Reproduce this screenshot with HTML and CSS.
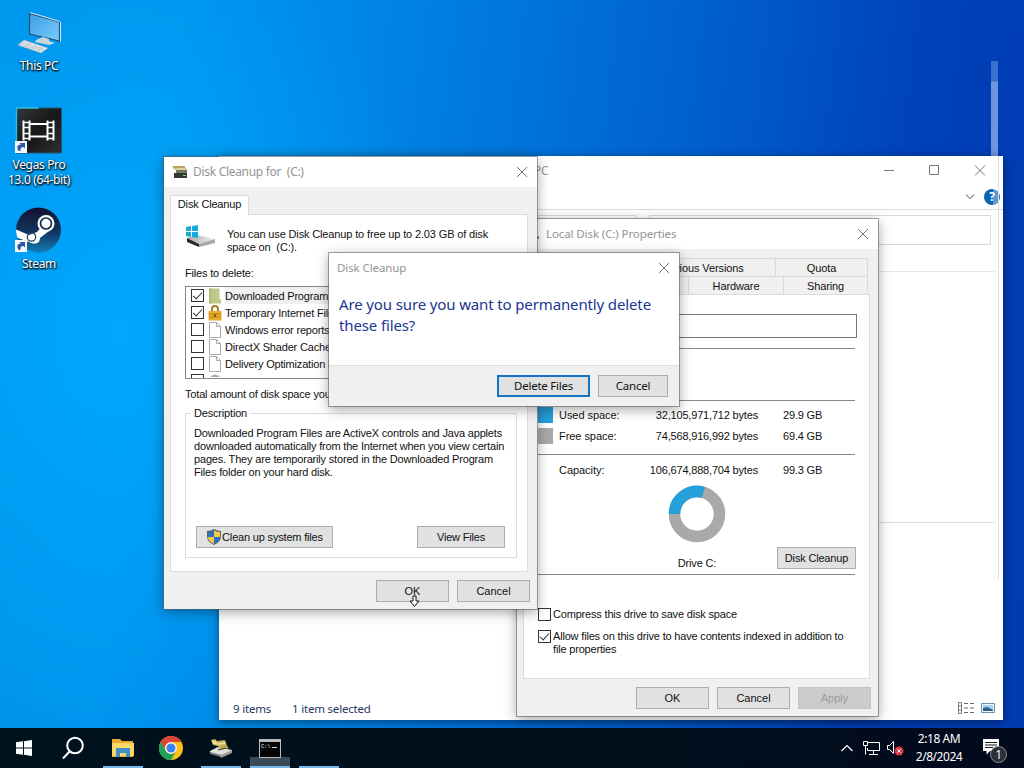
FILE: index.html
```html
<!DOCTYPE html>
<html lang="en">
<head>
<meta charset="utf-8">
<title>Desktop</title>
<link rel="stylesheet" href="styles.css">
</head>
<body>
<div class="desktop">
  <div class="icons">
    <div class="shortcut pc">
      <svg width="48" height="48" viewBox="0 0 48 48"><defs><linearGradient id="scr" x1="0" y1="0" x2="1" y2="1"><stop offset="0" stop-color="#3d9de4"/><stop offset="1" stop-color="#79ccfd"/></linearGradient></defs><path d="M14.500 5.500l30 8.500v19l-30-7z" fill="url(#scr)" stroke="#24506f" stroke-width="1.200"/><path d="M15 4.500l30 9" stroke="#d5edf8"/><path d="M45.500 14v19.500" stroke="#dceaf3"/><path d="M21 32l7-3 6 2v2l6 2-6 2-14-3z" fill="#c9d6dc"/><path d="M3 37l6-5 24 8-7 5z" fill="#e5e8ea" stroke="#87a7b9" stroke-width=".5"/><path d="M6 36l21 7M8 34.500l21 7M9 40l6-5M15 42l6-5M21 44l6-5" stroke="#aab8c0" stroke-width=".7"/></svg>
      <span>This PC</span>
    </div>
    <div class="shortcut vegas">
      <svg width="48" height="48" viewBox="0 0 48 48"><defs><linearGradient id="veg" x1="0" y1="0" x2="1" y2="1"><stop offset="0" stop-color="#34373a"/><stop offset=".5" stop-color="#161718"/><stop offset="1" stop-color="#303133"/></linearGradient></defs><path d="M1.500 2h45v45h-45z" fill="url(#veg)" stroke="#28556d"/><path d="M1.500 47V2h22" fill="none" stroke="#25c5e7" stroke-width="1.300"/><g stroke="#fff" stroke-width="2" fill="none" transform="translate(.5 .5)"><path d="M8 14v20M14 14v20M32 14v20M38 14v20M14 17.500h18M14 30h18"/><path d="M8 16h6M8 21h6M8 27h6M8 32h6M32 16h6M32 21h6M32 27h6M32 32h6" stroke-width="1.700"/></g><path d="M0 35h12v12H0z" fill="#f4f8fb"/><path d="M3.500 45Q0 39 6 38.500L4.500 37H10v5.500L8.500 41Q5 41 5.500 45z" fill="#285aa5"/></svg>
      <span>Vegas Pro</span><span>13.0 (64-bit)</span>
    </div>
    <div class="shortcut steam">
      <svg width="48" height="48" viewBox="0 0 48 48"><defs><linearGradient id="st" x1="0" y1="0" x2="0" y2="1"><stop offset="0" stop-color="#11132c"/><stop offset=".55" stop-color="#123562"/><stop offset="1" stop-color="#127eb2"/></linearGradient><clipPath id="stc"><circle cx="23.500" cy="23" r="22.500"/></clipPath></defs><circle cx="23.500" cy="23" r="22.500" fill="url(#st)"/><g clip-path="url(#stc)"><path d="M0 22l14 6 8-3 6-7 6 6-9 7c0 6-6 7-11 4L0 30z" fill="#fff"/><circle cx="31" cy="16.500" r="8.500" fill="#fff"/></g><circle cx="31" cy="16.500" r="5.500" fill="#fff" stroke="#17294c" stroke-width="1.700"/><circle cx="16.500" cy="30" r="4.200" fill="none" stroke="#25446e" stroke-width="1.300"/><path d="M0 33h12v12H0z" fill="#f4f8fb"/><path d="M3.500 43Q0 37 6 36.500L4.500 35H10v5.500L8.500 39Q5 39 5.500 43z" fill="#285aa5"/></svg>
      <span>Steam</span>
    </div>
  </div>
  <div class="trail"></div>

  <section class="window explorer">
    <header class="ex-title"><span>PC</span>
      <svg width="110" height="14" viewBox="0 0 110 14" fill="none" stroke="#777"><path d="M3 7.500h10M48.500 2.500h9v9h-9zM94 2.500l10 10M104 2.500l-10 10"/></svg>
    </header>
    <div class="ex-ribbon">
      <svg width="10" height="8" viewBox="0 0 10 8" fill="none" stroke="#999" stroke-width="1.300"><path d="M1 1.500l4 4 4-4"/></svg>
      <b class="help">?</b>
    </div>
    <div class="ex-address"><div class="path"></div><div class="search"></div></div>
    <div class="ex-head"></div>
    <div class="ex-body"></div>
    <footer class="ex-status"><span>9 items</span><span>1 item selected</span>
      <svg width="40" height="14" viewBox="0 0 40 14" fill="none"><path d="M2.500 1.500h3v11h-3zM2 5h4M2 9h4" stroke="#777"/><path d="M8 2.500h4M14 2.500h4M8 7h4M14 7h4M8 11.500h4M14 11.500h4" stroke="#666"/><path d="M25.500 2.500h13v9h-13z" fill="#e8f6fd" stroke="#6b93ad"/><path d="M27 4h10v6H27z" fill="#9fd2ee"/><path d="M27 10V7l4-1 6 3v1z" fill="#315d7e"/></svg>
    </footer>
    <div class="edge"></div>
  </section>

  <section class="window props">
    <header class="title"><i class="dot"></i><span>Local Disk (C:) Properties</span>
      <svg width="12" height="12" viewBox="0 0 12 12" stroke="#777"><path d="M1 1l10 10M11 1L1 11"/></svg>
    </header>
    <div class="tabs"><span class="t-prev">Previous Versions</span><span class="t-quota">Quota</span></div>
    <div class="tabs second"><span class="t-gen"></span><span class="t-hard">Hardware</span><span class="t-share">Sharing</span></div>
    <div class="panel">
      <div class="field"></div>
      <hr class="h1"><hr class="h2">
      <div class="row used"><i></i><span>Used space:</span><span>32,105,971,712 bytes</span><span>29.9 GB</span></div>
      <div class="row free"><i></i><span>Free space:</span><span>74,568,916,992 bytes</span><span>69.4 GB</span></div>
      <hr class="h3">
      <div class="row cap"><i></i><span>Capacity:</span><span>106,674,888,704 bytes</span><span>99.3 GB</span></div>
      <div class="drive">
        <div class="chart"><svg width="58" height="58" viewBox="0 0 58 58" fill="none" stroke-width="11.500"><circle cx="29" cy="29" r="22.500" stroke="#a9a9a9"/><path d="M6.500 29A22.500 22.500 0 0 1 35.500 7.450" stroke="#26a0da"/></svg><span>Drive C:</span></div>
        <button class="btn">Disk Cleanup</button>
      </div>
      <hr class="h4">
      <label class="check c1"><i></i><span>Compress this drive to save disk space</span></label>
      <label class="check c2"><i class="on"></i><span>Allow files on this drive to have contents indexed in addition to<br>file properties</span></label>
    </div>
    <footer class="actions"><button class="btn">OK</button><button class="btn">Cancel</button><button class="btn off">Apply</button></footer>
  </section>

  <section class="window cleanup">
    <header class="title">
      <svg width="16" height="14" viewBox="0 0 16 14"><path d="M0 1h13v4H3z" fill="#b5a55f"/><path d="M3 3h12v2H3z" fill="#ddd09a"/><path d="M4 5h11v4H4z" fill="#77765f"/><path d="M2 8h13v5H2z" fill="#353936"/><path d="M11 10h3v1h-3z" fill="#90d783"/></svg>
      <span>Disk Cleanup for&nbsp; (C:)</span>
      <svg width="12" height="12" viewBox="0 0 12 12" stroke="#777"><path d="M1 1l10 10M11 1L1 11"/></svg>
    </header>
    <div class="tab">Disk Cleanup</div>
    <div class="panel">
      <div class="intro">
        <svg width="32" height="26" viewBox="0 0 32 26"><defs><linearGradient id="dr"><stop offset="0" stop-color="#aaa"/><stop offset="1" stop-color="#f1f1f1"/></linearGradient></defs><path d="M2 13l10-3 18 4-16 5z" fill="url(#dr)"/><path d="M2 13l12 6v3L2 17z" fill="#292929"/><path d="M14 19l16-5v4l-16 4z" fill="#a6a6a6"/><path d="M1 2l5-1v5H1zM7 1l6-1v6H7zM1 7h5v5l-5-1zM7 7h6v6l-6-1z" fill="#18a9dd"/></svg>
        <p>You can use Disk Cleanup to free up to 2.03 GB of disk<br>space on&nbsp; (C:).</p>
      </div>
      <div class="lbl">Files to delete:</div>
      <div class="list">
        <div class="item sel"><i class="on"></i><svg width="14" height="16" viewBox="0 0 14 16"><path d="M1 .5h10.500V11H13v4.500H1z" fill="#bfc98c"/><path d="M1 .5h2v15H1z" fill="#aeb875"/></svg><span>Downloaded Program Files</span></div>
        <div class="item"><i class="on"></i><svg width="14" height="16" viewBox="0 0 14 16"><path d="M4 8V4q0-3 3-3t3 3v4" fill="none" stroke="#a6801c" stroke-width="2"/><rect x=".5" y="6" width="13" height="9.500" rx="1" fill="#e9ae2e"/><path d="M1 9h12M1 12h12" stroke="#b98116"/><path d="M7 9v3" stroke="#6b4a0c" stroke-width="1.500"/></svg><span>Temporary Internet Files</span></div>
        <div class="item"><i></i><svg width="14" height="16" viewBox="0 0 14 16"><path d="M1.500.5h7l4 4v11h-11zM8.500.5v4h4" fill="#fff" stroke="#aaa"/></svg><span>Windows error reports</span></div>
        <div class="item"><i></i><svg width="14" height="16" viewBox="0 0 14 16"><path d="M1.500.5h7l4 4v11h-11zM8.500.5v4h4" fill="#fff" stroke="#aaa"/></svg><span>DirectX Shader Cache</span></div>
        <div class="item"><i></i><svg width="14" height="16" viewBox="0 0 14 16"><path d="M1.500.5h7l4 4v11h-11zM8.500.5v4h4" fill="#fff" stroke="#aaa"/></svg><span>Delivery Optimization Files</span></div>
        <div class="item"><i></i><svg width="14" height="16" viewBox="0 0 14 16"><path d="M2 4q5-5 10 0z" fill="#aaa"/></svg></div>
      </div>
      <div class="lbl total">Total amount of disk space you gain:</div>
      <fieldset>
        <legend>Description</legend>
        <p>Downloaded Program Files are ActiveX controls and Java applets<br>downloaded automatically from the Internet when you view certain<br>pages. They are temporarily stored in the Downloaded Program<br>Files folder on your hard disk.</p>
        <div class="pair"><button class="btn wide"><svg width="16" height="16" viewBox="0 0 16 16"><path d="M8 0q3 2 7 2v5q0 6-7 9Q1 13 1 7V2q4 0 7-2z" fill="#54616b"/><path d="M8 1.500Q5 3 2 3v5h6z" fill="#2c6fbf"/><path d="M8 1.500Q11 3 14 3v5H8z" fill="#f6c945"/><path d="M2 8h6v7Q2 12 2 8z" fill="#f6c945"/><path d="M8 8h6q0 4-6 7z" fill="#2c6fbf"/></svg>Clean up system files</button><button class="btn view">View Files</button></div>
      </fieldset>
    </div>
    <footer class="actions"><button class="btn">OK</button><button class="btn">Cancel</button></footer>
  </section>

  <section class="window confirm">
    <header class="title"><span>Disk Cleanup</span><svg width="12" height="12" viewBox="0 0 12 12" stroke="#777"><path d="M1 1l10 10M11 1L1 11"/></svg></header>
    <p>Are you sure you want to permanently delete<br>these files?</p>
    <footer><button class="btn primary">Delete Files</button><button class="btn">Cancel</button></footer>
  </section>

  <svg class="cursor" width="11" height="13" viewBox="0 0 11 13"><path d="M4 1h3v5h3L5.500 11.500 1 6h3z" fill="#fff" stroke="#111"/></svg>

  <nav class="taskbar">
    <div class="cell"><svg width="16" height="16" viewBox="0 0 16 16" fill="#fff"><path d="M0 2.300l7-1v6.200H0zM8 1.200L16 0v7.500H8zM0 8.500h7v6.200l-7-1zM8 8.500h8V16l-8-1.200z"/></svg></div>
    <div class="cell find"><svg width="24" height="24" viewBox="0 0 24 24" fill="none" stroke="#fff" stroke-width="2"><circle cx="14" cy="9.500" r="7.800"/><path d="M8.500 15.500L2 22.500"/></svg></div>
    <div class="cell open"><svg width="22" height="20" viewBox="0 0 22 20"><path d="M0 1h8l2 2h11v16H0z" fill="#e9ac31"/><path d="M0 5h22v13H0z" fill="#fbd668"/><path d="M4 10h14v9h-4v-4H8v4H4z" fill="#3f8fc9"/></svg></div>
    <div class="cell"><svg width="24" height="24" viewBox="0 0 24 24"><circle cx="12" cy="12" r="12" fill="#fbc116"/><path d="M1.600 6A12 12 0 0 1 22.400 6H12a6 6 0 0 0-5.200 9z" fill="#dc4437"/><path d="M1.600 6A12 12 0 0 0 12 24l5.200-9A6 6 0 0 1 6.800 15z" fill="#1da25c"/><circle cx="12" cy="12" r="5.800" fill="#fff"/><circle cx="12" cy="12" r="4.600" fill="#3e82f1"/></svg></div>
    <div class="cell open"><svg width="22" height="20" viewBox="0 0 22 20"><path d="M0 13l8-4 14 3v2l-11 5-11-4z" fill="#e1e1dc"/><path d="M0 14l11 3v2L0 16z" fill="#777"/><path d="M11 17l11-5v3l-11 5z" fill="#9b9b98"/><path d="M1 2l4-1 2 2 8-1 2 6 2 2-8 2-3-4-5-1z" fill="#c5ae54"/><path d="M2 2l4 1 1 2 8-1 1 2-8 1-5-1z" fill="#eadc94"/><path d="M8 12l8-2" stroke="#333"/></svg></div>
    <div class="cell open active"><svg width="22" height="19" viewBox="0 0 22 19"><path d="M0 0h22v19H0z" fill="#b9bcbd"/><path d="M1 3h20v15H1z" fill="#050505"/><path d="M13 8.500h5" stroke="#ddd"/><text x="2" y="8.500" fill="#eee" font-family="Liberation Mono" font-size="5.500">C:\</text></svg></div>
    <div class="cell open"></div>
    <div class="tray">
      <svg class="chev" width="12" height="8" viewBox="0 0 12 8" fill="none" stroke="#fff" stroke-width="1.200"><path d="M.5 7L6 1.500 11.500 7"/></svg>
      <svg class="net" width="17" height="15" viewBox="0 0 17 15" fill="none" stroke="#fff"><path d="M4.500 1.500h12v8h-12V7M.5.500h4v4h-4zM2.500 4.500v9M6 13.500h9M10.500 9.500v4"/></svg>
      <svg class="vol" width="17" height="15" viewBox="0 0 17 15"><path d="M.5 4.500h2l4-4v12l-4-4h-2z" fill="none" stroke="#fff"/><circle cx="12" cy="10" r="4.500" fill="#d8383e"/><path d="M10.300 8.300l3.400 3.400M13.700 8.300l-3.400 3.400" stroke="#fff"/></svg>
      <div class="clock"><span>2:18 AM</span><span>2/8/2024</span></div>
      <svg class="note" width="26" height="26" viewBox="0 0 26 26"><path d="M1 1h16v12H8l-3.500 3.500V13H1z" fill="#fff"/><path d="M3 4.500h12M3 7h12M3 9.500h8" stroke="#101522"/><circle cx="16.500" cy="16.500" r="8" fill="#2b2f38" stroke="#8a8d92"/><text x="16.500" y="21" fill="#fff" font-family="Open Sans" font-size="12" text-anchor="middle">1</text></svg>
    </div>
  </nav>
</div>
</body>
</html>
```
FILE: styles.css
```css
* { box-sizing: border-box; }
body { margin: 0; overflow: hidden; font: 11px/13px "Liberation Sans", Arial, sans-serif; letter-spacing: -.18px; color: #111; }
p, fieldset, hr { margin: 0; }
p { white-space: nowrap; }
svg { display: block; flex: none; }
span { white-space: nowrap; }

.desktop {
  position: relative; width: 1024px; height: 768px; overflow: hidden;
  background:
    radial-gradient(ellipse 320px 420px at 120px 330px, rgba(0, 172, 255, .8), transparent),
    linear-gradient(97deg, #0094ec 0, #0095ee 180px, #0085e4 380px, #006fd8 570px, #0057c9 770px, #0040b8 930px, #003bb2 100%);
}
.icons { width: 78px; padding-top: 8px; display: flex; flex-direction: column; }
.shortcut { display: flex; flex-direction: column; align-items: center; color: #fff; font: 12px/15px "Noto Sans", "Open Sans", sans-serif; letter-spacing: -.35px; text-shadow: 1px 1px 2px #000, 0 1px 2px #000; }
.shortcut svg { margin-bottom: 2px; }
.pc { height: 98px; }
.vegas { height: 101px; }
.vegas svg { margin-bottom: 3px; }
.steam svg { margin-bottom: 1px; }
.trail { position: absolute; left: 991px; top: 61px; width: 7px; height: 100px; background: linear-gradient(#3a6fce 20%, #6d94dc 21%, #6f97dd); }

.window { position: absolute; display: flex; flex-direction: column; background: #f0f0f0; box-shadow: 0 0 0 1px rgba(90, 90, 90, .55), 0 3px 12px rgba(0, 0, 0, .38); }
.title { display: flex; align-items: center; background: #fff; color: #949494; font: 12px/16px "Noto Sans", "Open Sans", sans-serif; }
.title svg:last-child { margin-left: auto; }
.btn { width: 73px; height: 22px; padding: 0; border: 1px solid #adadad; background: #e1e1e1; font: inherit; letter-spacing: inherit; color: #111; white-space: nowrap; display: flex; align-items: center; justify-content: center; }
.btn.off { background: #ccc; border-color: #c4c4c4; color: #9b9b9b; }
.actions { display: flex; justify-content: flex-end; gap: 8px; }
.actions .btn { letter-spacing: 0; }
.panel { background: #fff; border: 1px solid #dcdcdc; }

.explorer { left: 219px; top: 156px; width: 784px; height: 564px; background: #fff; box-shadow: 0 2px 9px rgba(0, 0, 0, .45); font: 12px/16px "Noto Sans", sans-serif; }
.ex-title { height: 29px; padding: 0 12px 0 315px; display: flex; align-items: center; justify-content: space-between; color: #999; }
.ex-title svg { margin-top: -2px; }
.ex-ribbon { height: 25px; border-bottom: 1px solid #dcdcdc; display: flex; align-items: center; justify-content: flex-end; gap: 9px; padding-right: 3px; }
.help { width: 16px; height: 16px; border-radius: 50%; background: #0a64b4; color: #fff; text-align: center; font: bold 12px/16px "Open Sans", sans-serif; }
.ex-address { height: 36px; padding: 5px 12px 1px 100px; display: flex; justify-content: space-between; }
.path { width: 318px; border: 1px solid #d9d9d9; }
.search { width: 342px; border: 1px solid #d9d9d9; }
.ex-head { height: 26px; border-bottom: 1px solid #e5e5e5; margin-right: 8px; }
.ex-body { height: 251px; border-bottom: 1px solid #dedede; margin-right: 8px; }
.ex-status { margin-top: auto; height: 23px; padding: 0 7px 0 14px; display: flex; align-items: center; color: #1e395b; font-size: 11.500px; letter-spacing: -.2px; }
.ex-status span + span { margin-left: 21px; }
.ex-status svg { margin: -2px 0 0 auto; }
.edge { position: absolute; left: 774px; top: 0; width: 6px; height: 424px; background: rgba(245, 248, 248, .35); border-right: 1px solid #dbe0df; }

.props { left: 517px; top: 219px; width: 361px; height: 497px; }
.props .title { height: 30px; padding: 0 9px 0 19px; font-size: 11.500px; letter-spacing: -.1px; }
.dot { width: 3px; height: 3px; margin: 6px 7px 0 0; background: #888; }
.tabs { display: flex; justify-content: flex-end; margin: 9px 10px 0 6px; height: 18px; text-align: center; line-height: 18px; letter-spacing: -.1px; }
.tabs.second { margin-top: 0; }
.tabs span { flex: none; border: 1px solid #d9d9d9; border-width: 1px 1px 0 0; }
.t-prev { width: 160px; padding-left: 10px; }
.t-quota { width: 92px; }
.t-gen { width: 164px; }
.t-hard { width: 95px; }
.t-share { width: 84px; }
.props .panel { width: 347px; height: 385px; margin-left: 6px; padding: 19px 14px 0 14px; }
.field { height: 24px; margin-right: -2px; border: 1px solid #767676; }
hr { border: 0; border-top: 1px solid #888; }
.h1 { margin-top: 10px; }
.h2 { margin-top: 51px; }
.row { height: 16px; display: grid; grid-template-columns: 15px 70px 135px 1fr; align-items: center; }
.row i { height: 16px; }
.row span:nth-child(2) { padding-left: 6px; letter-spacing: -.05px; }
.row span:nth-child(3) { text-align: right; }
.row span:nth-child(4) { padding-left: 25px; }
.used { margin-top: 6px; }
.used i { background: #26a0da; }
.free { margin-top: 5px; }
.free i { background: #a9a9a9; }
.h3 { margin-top: 10px; }
.cap { margin-top: 7px; }
.drive { height: 90px; margin-top: 7px; padding-left: 130px; display: flex; align-items: flex-start; justify-content: space-between; }
.drive .btn { width: 79px; margin: 62px -1px 0 0; }
.chart { display: flex; flex-direction: column; align-items: center; }
.chart span { margin-top: 14px; }
.h4 { margin-top: -1px; }
.check { display: flex; gap: 2px; }
.c1 { margin-top: 33px; }
.c2 { margin-top: 9px; }
.check i, .item i { flex: none; width: 13px; height: 13px; border: 1px solid #333; background: #fff; }
i.on::after { content: ""; display: block; width: 8px; height: 4px; margin: 2px 0 0 1px; border: solid #333; border-width: 0 0 1.300px 1.300px; transform: rotate(-48deg); }
.props .actions { margin: 8px 7px 0 0; }

.cleanup { left: 164px; top: 157px; width: 373px; height: 452px; }
.cleanup .title { height: 30px; padding: 0 9px 0 8px; gap: 5px; letter-spacing: -.3px; }
.tab { width: 79px; height: 20px; margin: 8px 0 -1px 6px; z-index: 1; background: #fff; border: 1px solid #dcdcdc; border-bottom: 0; line-height: 17px; text-align: center; }
.cleanup .panel { width: 358px; height: 358px; margin-left: 6px; padding: 9px 10px 0 14px; }
.intro { display: flex; gap: 10px; padding-top: 1px; letter-spacing: -.14px; }
.intro p { padding-top: 3px; }
.lbl { margin-top: 13px; }
.list { height: 93px; margin-top: 6px; padding-left: 5px; overflow: hidden; border: 1px solid #828790; }
.item { height: 17px; display: flex; align-items: center; padding-top: 2px; }
.item.sel { background: linear-gradient(90deg, transparent 34px, #f0f0f0 34px); }
.item i { margin-top: -3px; }
.item svg { margin: -1px 3px 0 4px; }
.total { margin-top: 9px; }
fieldset { min-width: 0; height: 151px; margin-top: 6px; padding: 7px 8px 0; border: 1px solid #dcdcdc; }
legend { margin-left: -3px; padding: 0 3px; }
.pair { display: flex; justify-content: space-between; margin: 47px 3px 0 2px; }
.wide { width: 137px; }
.view { width: 88px; }
.cleanup .actions { margin: 8px 7px 0 0; }

.confirm { left: 329px; top: 253px; width: 350px; height: 153px; background: #fff; }
.confirm .title { height: 28px; padding: 2px 9px 0 8px; font-size: 11.500px; letter-spacing: -.1px; }
.confirm p { height: 84px; padding: 13px 10px; color: #1b3691; font: 15px/21px "Noto Sans", "Open Sans", sans-serif; letter-spacing: -.13px; }
.confirm footer { height: 41px; background: #f0f0f0; border-top: 1px solid #dfdfdf; display: flex; justify-content: flex-end; gap: 8px; padding: 9px 11px 0 0; font: 11.500px/13px "Noto Sans", "Open Sans", sans-serif; }
.confirm .btn { width: 70px; padding-bottom: 2px; }
.confirm .primary { width: 93px; border: 2px solid #1374c4; letter-spacing: -.25px; }
.cursor { position: absolute; left: 409px; top: 595px; }

.taskbar { position: absolute; left: 0; bottom: 0; width: 1024px; height: 40px; display: flex; background: linear-gradient(90deg, #00121e, #000e1b 60%, #020a1d); }
.cell { width: 48px; display: flex; align-items: center; justify-content: center; margin-right: 1px; }
.find { width: 47px; margin-right: 2px; }
.open { border-bottom: 2px solid #76b9ed; margin: 0 4px 0 5px; width: 40px; padding-top: 2px; }
.active { background: linear-gradient(transparent 29px, #3a4a57 29px); }
.tray { margin-left: auto; width: 183px; display: flex; align-items: center; }
.net { margin-left: 10px; }
.vol { margin-left: 7px; }
.clock { width: 54px; margin-left: 8px; display: flex; flex-direction: column; align-items: center; color: #fff; font: 12px/18px "Noto Sans", "Open Sans", sans-serif; letter-spacing: -.45px; }
.note { margin: 6px 0 0 16px; }
```
